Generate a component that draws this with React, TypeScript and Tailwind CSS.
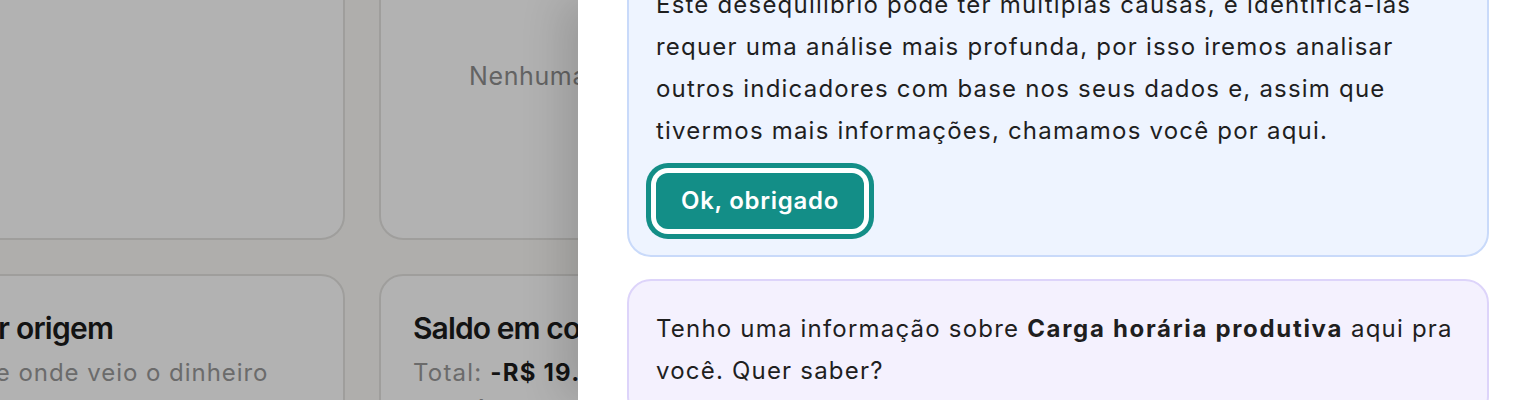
export default function App() {
  return (
    <div className="relative h-[400px] w-[1520px] overflow-hidden bg-[#fbfaf7] font-['Inter',sans-serif]">
      <Dashboard />
      <div className="absolute inset-0 bg-black/30" />
      <Drawer />
    </div>
  );
}

function Dashboard() {
  return (
    <div className="-ml-[361px] -mt-[60px] grid grid-cols-[706px_560px] gap-[34px]">
      <div className="h-[300px] rounded-3xl border-2 border-[#e4e3e0] bg-white" />
      <div className="flex h-[300px] items-center rounded-3xl border-2 border-[#e4e3e0] bg-white pb-[26px] pl-[88px]">
        <p className="text-[25px] tracking-wide text-[#8f8f8f]">Nenhuma entrada no período</p>
      </div>
      <div className="h-[300px] overflow-hidden rounded-3xl border-2 border-[#e4e3e0] bg-white px-8 pt-[30px]">
        <h3 className="whitespace-nowrap text-[30px] font-semibold tracking-[-0.025em] text-[#1c1c1c]">
          Receitas e despesas por origem
        </h3>
        <p className="mt-[4px] whitespace-nowrap text-[24px] tracking-[0.04em] text-[#9a9a9a]">
          Compreenda em detalhe de onde veio o dinheiro
        </p>
      </div>
      <div className="h-[300px] overflow-hidden rounded-3xl border-2 border-[#e4e3e0] bg-white px-8 pt-[30px]">
        <h3 className="whitespace-nowrap text-[30px] font-semibold tracking-[-0.03em] text-[#1c1c1c]">
          Saldo em conta
        </h3>
        <p className="mt-[4px] whitespace-nowrap text-[24px] tracking-[0.05em] text-[#9a9a9a]">
          Total: <span className="font-bold text-[#1c1c1c]">-R$ 19.482,37</span>
        </p>
        <p className="whitespace-nowrap text-[24px] tracking-[0.05em] text-[#9a9a9a]">no mês corrente</p>
      </div>
    </div>
  );
}

function Drawer() {
  return (
    <div className="absolute inset-y-0 right-0 w-[942px] bg-white shadow-[-16px_0_40px_rgba(0,0,0,0.14)]">
      <div className="-mt-[46px] flex flex-col gap-[22px] pl-[49px] pr-[31px]">
        <div className="rounded-3xl border-2 border-[#c9dafa] bg-[#eef4ff] px-[27px] pt-[28px] pb-[26px]">
          <p className="text-[24px] leading-[42px] tracking-[0.05em] text-[#1f1f1f]">
            Este desequilíbrio pode ter múltiplas causas, e identificá-las
            requer uma análise mais profunda, por isso iremos analisar outros
            indicadores com base nos seus dados e, assim que tivermos mais
            informações, chamamos você por aqui.
          </p>
          <button className="mt-[21px] h-14 w-[208px] rounded-xl bg-[#138e87] text-[24px] font-semibold tracking-[0.03em] text-white ring-[5px] ring-[#138e87] ring-offset-[5px] ring-offset-white">
            Ok, obrigado
          </button>
        </div>
        <div className="rounded-3xl border-2 border-[#ddd4fa] bg-[#f4f1fe] px-[27px] pt-[27px] pb-[26px]">
          <p className="text-[24px] leading-[42px] tracking-[0.05em] text-[#1f1f1f]">
            Tenho uma informação sobre{" "}
            <span className="font-bold tracking-[0.07em]">Carga horária produtiva</span> aqui pra
            você. Quer saber?
          </p>
        </div>
      </div>
    </div>
  );
}
